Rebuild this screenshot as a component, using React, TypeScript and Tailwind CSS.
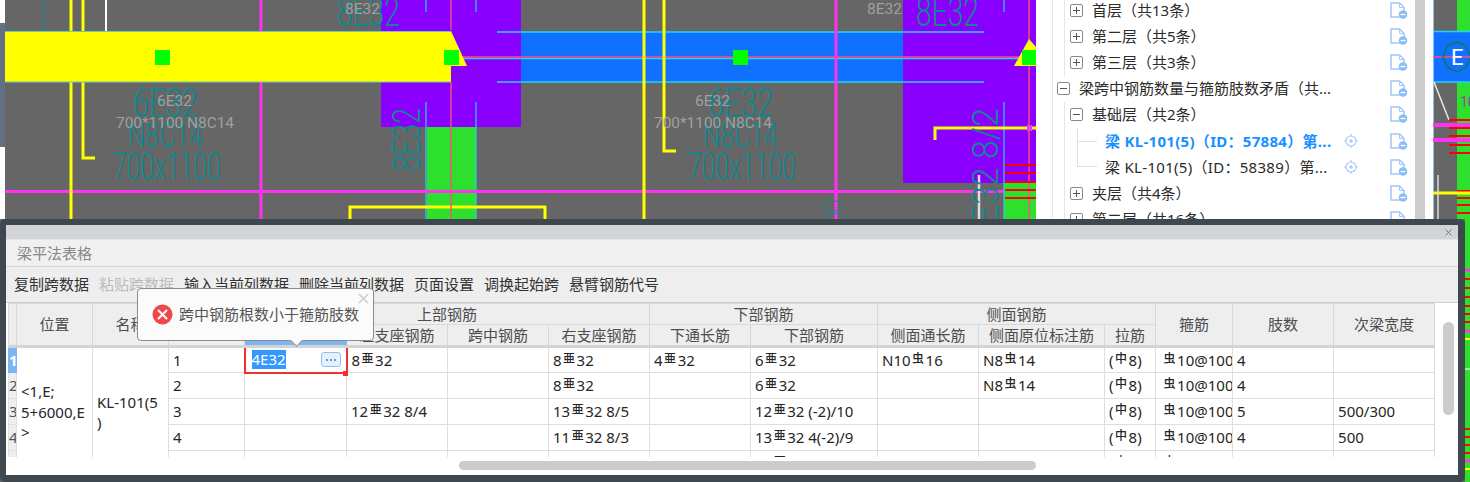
import { Fragment } from "react";

const uiFont = "font-['Noto_Sans','Noto_Sans_CJK_SC',sans-serif]";

const CYAN = "#22d3ee";
const TEAL = "#0a8a8f";
const MAGENTA = "#ff33ee";
const YELLOW = "#ffff00";
const PURPLE = "#8a00ff";
const GREEN = "#2de02d";
const BLUE = "#1070ff";
const PINK = "#ff4a80";
const LABEL = "#a0a0a0";

function CadText({ x, y, w, size, fill, children, rotate }: { x: number; y: number; w: number; size: number; fill: string; children: string; rotate?: boolean }) {
  return (
    <text
      x={x}
      y={y}
      fontSize={size}
      fill={fill}
      textLength={w}
      lengthAdjust="spacingAndGlyphs"
      fontWeight={fill === TEAL ? 300 : 400}
      fontFamily="Roboto, sans-serif"
      transform={rotate ? `rotate(-90 ${x} ${y})` : undefined}
    >
      {children}
    </text>
  );
}

function BeamLabels({ dx, labelDx }: { dx: number; labelDx: number }) {
  return (
    <g>
      <CadText x={133 + dx} y={117} w={65} size={41} fill={TEAL}>6E32</CadText>
      <CadText x={128 + dx} y={147} w={75} size={35} fill={TEAL}>N8C14</CadText>
      <CadText x={113 + dx} y={180} w={108} size={38} fill={TEAL}>700x1100</CadText>
      <CadText x={157 + labelDx} y={106} w={35} size={15} fill={LABEL}>6E32</CadText>
      <CadText x={116 + labelDx} y={128} w={118} size={15} fill={LABEL}>700*1100 N8C14</CadText>
    </g>
  );
}

function CadCanvas() {
  return (
    <svg width="1036" height="219" viewBox="0 0 1036 219" className="block shrink-0">
      <rect width="1036" height="219" fill="#666666" />
      <rect width="5" height="219" fill="#ffffff" />
      <rect y="23" width="5" height="124" fill="#637080" />

      <rect x="381" width="140" height="127" fill={PURPLE} />
      <rect x="427" y="127" width="49" height="92" fill={GREEN} />
      <rect x="903" width="133" height="183" fill={PURPLE} />
      <rect x="1004" y="183" width="32" height="36" fill={GREEN} />
      <rect x="521" y="32" width="382" height="50" fill={BLUE} />

      <path d="M426 0V12M476 0V12M426 102V219M476 102V219M1004 0V12M1004 102V219" stroke={CYAN} strokeWidth="1.2" fill="none" />
      <path d="M44 0V31" stroke="#148a90" strokeWidth="1.2" />
      <path d="M497 32H984M497 82H984M451 58.500H1030" stroke={CYAN} strokeWidth="1.600" />
      <path d="M451 57H1030" stroke={PINK} strokeWidth="1.400" />

      <path d="M261 0V219M836 0V219M5 191.500H1003" stroke={MAGENTA} strokeWidth="3" />
      <path d="M71 0V219M644 0V219" stroke={YELLOW} strokeWidth="3" />
      <path d="M83 0V158H95M664 0V151H676M350 219V207H545V219M935 140V128H1036" stroke={YELLOW} strokeWidth="3" fill="none" />
      <path d="M106 0V31" stroke="#ffffff" strokeWidth="2" />
      <path d="M979 175V219" stroke="#dddddd" strokeWidth="2.500" />

      <path d="M5 31H451L467 66H451V82H5Z" fill={YELLOW} />
      <path d="M5 31.500H451M5 82H451" stroke="#6fc6c0" strokeWidth="1" />
      <path d="M451 0V30M451 82V219M1029 0V219" stroke={PINK} strokeWidth="1.400" />
      <rect x="1027" y="125" width="5" height="6" fill={MAGENTA} />
      <path d="M1005 165H1036M1005 173H1036M1005 182H1036M1005 190H1036M1005 198H1036" stroke="#ff0000" strokeWidth="2" />

      <path d="M1029 39L1014 66H1036V47Z" fill={YELLOW} />
      <rect x="155" y="50" width="15" height="15" fill="#00ff00" />
      <rect x="444" y="50" width="15" height="15" fill="#00ff00" />
      <rect x="733" y="50" width="15" height="15" fill="#00ff00" />
      <rect x="1022" y="50" width="14" height="15" fill="#00ff00" />

      <BeamLabels dx={0} labelDx={0} />
      <BeamLabels dx={575} labelDx={538} />

      <CadText x={337} y={26} w={63} size={41} fill={TEAL}>8E32</CadText>
      <CadText x={345} y={14} w={35} size={15} fill={LABEL}>8E32</CadText>
      <CadText x={916} y={26} w={63} size={41} fill={TEAL}>8E32</CadText>
      <CadText x={867} y={14} w={35} size={15} fill={LABEL}>8E32</CadText>
      <CadText x={420} y={171} w={63} size={38} fill={TEAL} rotate>8E32</CadText>
      <CadText x={998} y={243} w={135} size={36} fill={TEAL} rotate>8E32 8/2</CadText>
      <ellipse cx="833" cy="206" rx="9" ry="5" fill="none" stroke={TEAL} strokeWidth="1" />
      <ellipse cx="833" cy="218" rx="9" ry="5" fill="none" stroke={TEAL} strokeWidth="1" />
    </svg>
  );
}

function RightCanvas() {
  return (
    <svg width="37" height="219" viewBox="0 0 37 219" className="block shrink-0">
      <rect width="37" height="219" fill="#666666" />
      <rect x="24" width="13" height="219" fill={GREEN} />
      <rect y="31" width="37" height="51" fill={BLUE} />
      <path d="M0 31.500H37M0 82H37" stroke={CYAN} strokeWidth="1.500" />
      <path d="M0 0V219" stroke="#a8dcff" strokeWidth="1.500" />
      <path d="M0 57H37" stroke={PINK} strokeWidth="1.500" />
      <path d="M24 42L33 46L38 57L33 67L24 72L14 67L10 57L14 46Z" fill="none" stroke="#0b7a50" strokeWidth="1.400" />
      <text x="18" y="65" fontSize="22" fontFamily="Roboto, sans-serif" fill="#ffffff">E</text>
      <path d="M1 82L16 120" stroke="#e8e8e8" strokeWidth="1.500" />
      <text x="27" y="107" fontSize="14" fontFamily="Roboto, sans-serif" fill="#a040a0">10</text>
      <path d="M0 125H37M0 140H37" stroke={MAGENTA} strokeWidth="4" />
      <path d="M16 120H37M16 128H37M16 136H37M16 145H37M16 153H37M24 191H37M24 198H37M24 205H37M24 213H37" stroke="#ff0000" strokeWidth="2" />
      <path d="M0 193H37" stroke={YELLOW} strokeWidth="3" />
      <path d="M5 175V219" stroke="#dddddd" strokeWidth="1.500" />
    </svg>
  );
}

function DocIcon() {
  return (
    <svg width="18" height="17" viewBox="0 0 18 17" className="shrink-0">
      <path d="M1 1H9.500L14 5.500V15H1Z" fill="#ffffff" stroke="#a0c8f8" strokeWidth="1.500" />
      <path d="M9.500 1V5.500H14" fill="none" stroke="#a0c8f8" strokeWidth="1" />
      <circle cx="13" cy="12.500" r="4.300" fill="#8cbdf5" />
      <path d="M10.500 12.500H15.500" stroke="#ffffff" strokeWidth="1.300" />
    </svg>
  );
}

function TargetIcon() {
  return (
    <svg width="14" height="14" viewBox="0 0 14 14" className="shrink-0">
      <circle cx="7" cy="7" r="5" fill="none" stroke="#a9cdf5" strokeWidth="1.200" />
      <circle cx="7" cy="7" r="1.800" fill="#a9cdf5" />
      <path d="M7 0V2.500M7 11.500V14M0 7H2.500M11.500 7H14" stroke="#a9cdf5" strokeWidth="1.200" />
    </svg>
  );
}

function ExpandBox({ open }: { open: boolean }) {
  return (
    <span className="relative flex h-[13px] w-[13px] shrink-0 items-center justify-center rounded-[2px] border border-[#888888] bg-white">
      <span className="h-px w-[7px] bg-[#555555]" />
      {!open && <span className="absolute h-[7px] w-px bg-[#555555]" />}
    </span>
  );
}

const Guide = ({ w }: { w: string }) => <span className={`${w} shrink-0 self-stretch border-l border-[#e6e6e6]`} />;

function TreeRow({ level, open, text, active, target, lastLeaf }: { level: number; open?: boolean; text: string; active?: boolean; target?: boolean; lastLeaf?: boolean }) {
  return (
    <div className="flex h-[26.2px] shrink-0 items-center pl-[16px]">
      {level === 1 && <Guide w="w-[5px]" />}
      {level === 2 && (
        <>
          <Guide w="w-[12px]" />
          <Guide w="w-[6px]" />
        </>
      )}
      {level === 3 && (
        <>
          <Guide w="w-[12px]" />
          <Guide w="w-[13px]" />
          <span className={`flex w-[20px] shrink-0 border-l border-[#e0e0e0] ${lastLeaf ? "h-1/2 items-end self-start" : "items-center self-stretch"}`}>
            <span className="h-px w-full bg-[#e0e0e0]" />
          </span>
        </>
      )}
      {level < 3 && <ExpandBox open={!!open} />}
      <span className={`whitespace-nowrap ${level === 3 ? "ml-[8px] tracking-[0.3px]" : "ml-[9px]"} ${active ? "font-bold text-[#1890ff]" : "text-[#2b2b2b]"}`}>
        {text}
      </span>
      <span className="ml-auto flex items-center">
        {target && <TargetIcon />}
        <span className="ml-[32px] mr-[7px]">
          <DocIcon />
        </span>
      </span>
    </div>
  );
}

function TreePanel() {
  return (
    <div className="flex h-[219px] w-[397px] shrink-0 overflow-hidden bg-white text-[15px] leading-none">
      <div className="-mt-[3px] flex min-w-0 flex-1 flex-col">
        <TreeRow level={2} text="首层（共13条）" />
        <TreeRow level={2} text="第二层（共5条）" />
        <TreeRow level={2} text="第三层（共3条）" />
        <TreeRow level={1} open text="梁跨中钢筋数量与箍筋肢数矛盾（共..." />
        <TreeRow level={2} open text="基础层（共2条）" />
        <TreeRow level={3} active target text="梁 KL-101(5)（ID：57884）第..." />
        <TreeRow level={3} lastLeaf target text="梁 KL-101(5)（ID：58389）第..." />
        <TreeRow level={2} text="夹层（共4条）" />
        <TreeRow level={2} text="第二层（共16条）" />
      </div>
      <div className="w-[10px] shrink-0 bg-[#cccccc]" />
      <div className="w-[8px] shrink-0" />
    </div>
  );
}

function Rebar({ value }: { value: string }) {
  const parts = value.split(/(亜|虫|中)/);
  return (
    <>
      {parts.map((part, i) =>
        i % 2 === 1 ? (
          <span key={i} className="mx-[1.500px] align-[3px] text-[12px] font-medium">
            {part}
          </span>
        ) : (
          <Fragment key={i}>{part}</Fragment>
        )
      )}
    </>
  );
}

const columnWidths = ["w-[8px]", "w-[76px]", "w-[76px]", "w-[76px]", "w-[102px]", "w-[101px]", "w-[101px]", "w-[101px]", "w-[101px]", "w-[127px]", "w-[101px]", "w-[126px]", "w-[51px]", "w-[77px]", "w-[101px]", "w-[101px]"];

// 跨号 onward, one entry per span
const rows = [
  ["1", "", "8亜32", "", "8亜32", "4亜32", "6亜32", "N10虫16", "N8虫14", "(中8)", "虫10@100", "4", ""],
  ["2", "", "", "", "8亜32", "", "6亜32", "", "N8虫14", "(中8)", "虫10@100", "4", ""],
  ["3", "", "12亜32 8/4", "", "13亜32 8/5", "", "12亜32 (-2)/10", "", "", "(中8)", "虫10@100", "5", "500/300"],
  ["4", "", "", "", "11亜32 8/3", "", "13亜32 4(-2)/9", "", "", "(中8)", "虫10@100", "4", "500"],
  ["5", "", "", "", "", "", "12亜32", "", "", "(中8)", "虫10@100", "4", ""],
];

const th = "border border-[#d8d8d8] bg-[#eeeeee] p-0 text-center font-normal text-[#4d4d4d]";
const td = "overflow-hidden whitespace-nowrap border border-[#dedede] bg-white py-0 pl-[4px] pr-0 text-[#262626]";
const tdStirrup = "overflow-hidden whitespace-nowrap border border-[#dedede] bg-white py-0 pl-[6px] pr-0 text-[#262626]";

function BeamTable() {
  return (
    <table className="w-[1426px] table-fixed border-collapse text-[15px] leading-none">
      <colgroup>
        {columnWidths.map((w, i) => (
          <col key={i} className={w} />
        ))}
      </colgroup>
      <thead>
        <tr className="h-[21px]">
          <th rowSpan={2} className={th} />
          <th rowSpan={2} className={th}>位置</th>
          <th rowSpan={2} className={th}>名称</th>
          <th rowSpan={2} className={th}>跨号</th>
          <th colSpan={4} className={th}>上部钢筋</th>
          <th colSpan={2} className={th}>下部钢筋</th>
          <th colSpan={3} className={th}>侧面钢筋</th>
          <th rowSpan={2} className={th}>箍筋</th>
          <th rowSpan={2} className={th}>肢数</th>
          <th rowSpan={2} className={th}>次梁宽度</th>
        </tr>
        <tr className="h-[22px] border-b-[3px] border-[#d4d4d4]">
          <th className="border border-[#7ab5f5] bg-[#7ab5f5] p-0" />
          <th className={th}>左支座钢筋</th>
          <th className={th}>跨中钢筋</th>
          <th className={th}>右支座钢筋</th>
          <th className={th}>下通长筋</th>
          <th className={th}>下部钢筋</th>
          <th className={th}>侧面通长筋</th>
          <th className={th}>侧面原位标注筋</th>
          <th className={th}>拉筋</th>
        </tr>
      </thead>
      <tbody>
        {rows.map((row, r) => (
          <tr key={r} className="h-[26px]">
            <td className={r === 0 ? "overflow-hidden whitespace-nowrap border border-[#7ab5f5] bg-[#7ab5f5] p-0 text-center font-bold text-white" : "overflow-hidden whitespace-nowrap border border-[#dedede] bg-[#eeeeee] p-0 text-center text-[#555555]"}>
              {r + 1}
            </td>
            {r === 0 && (
              <>
                <td rowSpan={5} className="border border-[#dedede] bg-white py-0 pl-[4px] pr-0 leading-[20.500px] text-[#262626]">
                  &lt;1,E;
                  <br />
                  5+6000,E
                  <br />
                  &gt;
                </td>
                <td rowSpan={5} className="border border-[#dedede] bg-white py-0 pl-[4px] pr-0 leading-[20.500px] text-[#262626]">
                  KL-101(5
                  <br />)
                </td>
              </>
            )}
            {row.map((value, c) =>
              r === 0 && c === 1 ? (
                <td key={c} className="border-x-2 border-b-2 border-t-0 border-[#f23030] bg-white p-0">
                  <div className="flex items-center pl-[6px] pr-[5px]">
                    <span className="bg-[#3399ff] py-[2px] text-white">4E32</span>
                    <span className="ml-auto flex h-[15px] w-[20px] items-center justify-center gap-[2px] rounded-[3px] border border-[#8fc0f2] bg-[#e6f1fd]">
                      <span className="h-[2px] w-[2px] bg-[#5f9de0]" />
                      <span className="h-[2px] w-[2px] bg-[#5f9de0]" />
                      <span className="h-[2px] w-[2px] bg-[#5f9de0]" />
                    </span>
                  </div>
                </td>
              ) : (
                <td key={c} className={c === 10 ? tdStirrup : td}>
                  <Rebar value={value} />
                </td>
              )
            )}
          </tr>
        ))}
      </tbody>
    </table>
  );
}

function ErrorPopup() {
  return (
    <div className="absolute left-[131px] top-[63px] flex h-[53px] w-[237px] items-center rounded-[4px] border border-[#8c8c8c] bg-[#fbfbfb] pl-[14px] text-[15px] leading-none text-[#555555]">
      <svg width="21" height="21" viewBox="0 0 21 21" className="shrink-0">
        <circle cx="10.500" cy="10.500" r="10" fill="#f0474a" />
        <path d="M6.500 6.500L14.500 14.500M14.500 6.500L6.500 14.500" stroke="#ffffff" strokeWidth="2" strokeLinecap="round" />
      </svg>
      <span className="ml-[6px] whitespace-nowrap">跨中钢筋根数小于箍筋肢数</span>
      <svg width="11" height="11" viewBox="0 0 11 11" className="absolute right-[4px] top-[4px]">
        <path d="M1 1L10 10M10 1L1 10" stroke="#cccccc" strokeWidth="1.500" />
      </svg>
      <span className="absolute bottom-[-5px] left-[154px] h-[9px] w-[9px] rotate-45 border-b border-r border-[#8c8c8c] bg-[#fbfbfb]" />
    </div>
  );
}

function RebarWindow() {
  const actions = [
    { label: "复制跨数据" },
    { label: "粘贴跨数据", disabled: true },
    { label: "输入当前列数据" },
    { label: "删除当前列数据" },
    { label: "页面设置" },
    { label: "调换起始跨" },
    { label: "悬臂钢筋代号" },
  ];

  return (
    <div className="relative flex h-[263px] w-[1465px] shrink-0 flex-col overflow-hidden rounded-[5px] border-b-[7px] border-l-[6px] border-r-[7px] border-t-[6px] border-[#3f474f] bg-white text-[15px]">
      <div className="flex h-[15px] shrink-0 items-center justify-end border-b border-[#e4e4e4] bg-[#d2d4d8] pr-[6px]">
        <svg width="7" height="7" viewBox="0 0 7 7">
          <path d="M0.500 0.500L6.500 6.500M6.500 0.500L0.500 6.500" stroke="#777777" strokeWidth="1" />
        </svg>
      </div>
      <div className="flex h-[27px] shrink-0 items-center border-b border-[#d4d4d4] bg-[#f0f0f0] pl-[11px] leading-none text-[#888888]">梁平法表格</div>
      <div className="flex h-[36px] shrink-0 items-center gap-[10px] border-b border-[#cfcfcf] bg-[#eeeeee] pl-[8px] leading-none text-[#333333]">
        {actions.map((action) => (
          <span key={action.label} className={action.disabled ? "text-[#bbbbbb]" : ""}>
            {action.label}
          </span>
        ))}
      </div>
      <div className="flex h-[154px] shrink-0 overflow-hidden pl-[2px]">
        <div className="w-[1426px] shrink-0">
          <BeamTable />
        </div>
        <div className="ml-[9px] mt-[19px] h-[93px] w-[11px] shrink-0 rounded-full bg-[#cccccc]" />
      </div>
      <div className="flex flex-1 items-start pl-[453px] pt-[4px]">
        <div className="h-[9px] w-[577px] rounded-full bg-[#cccccc]" />
      </div>
      <span className="absolute left-[337px] top-[146px] h-[5px] w-[5px] bg-[#f23030]" />
      <ErrorPopup />
    </div>
  );
}

function EdgeStrip() {
  return (
    <svg width="5" height="263" viewBox="0 0 5 263" className="block shrink-0">
      <rect width="5" height="263" fill={GREEN} />
      <path d="M0 60H5M0 69H5M0 78H5M0 87H5M0 95H5M0 103H5M0 210H5M0 218H5M0 226H5M0 234H5" stroke="#ff0000" strokeWidth="2" />
      <path d="M0 51H5M0 112H5M0 242H5" stroke={MAGENTA} strokeWidth="3" />
      <path d="M0 120H5M0 250H5" stroke={YELLOW} strokeWidth="2" />
      <path d="M0 150H5" stroke="#ffffff" strokeWidth="1" />
    </svg>
  );
}

export default function App() {
  return (
    <div className={`flex h-[482px] w-[1470px] flex-col overflow-hidden bg-[#666666] ${uiFont}`}>
      <div className="flex h-[219px] shrink-0">
        <CadCanvas />
        <TreePanel />
        <RightCanvas />
      </div>
      <div className="flex flex-1">
        <RebarWindow />
        <EdgeStrip />
      </div>
    </div>
  );
}
